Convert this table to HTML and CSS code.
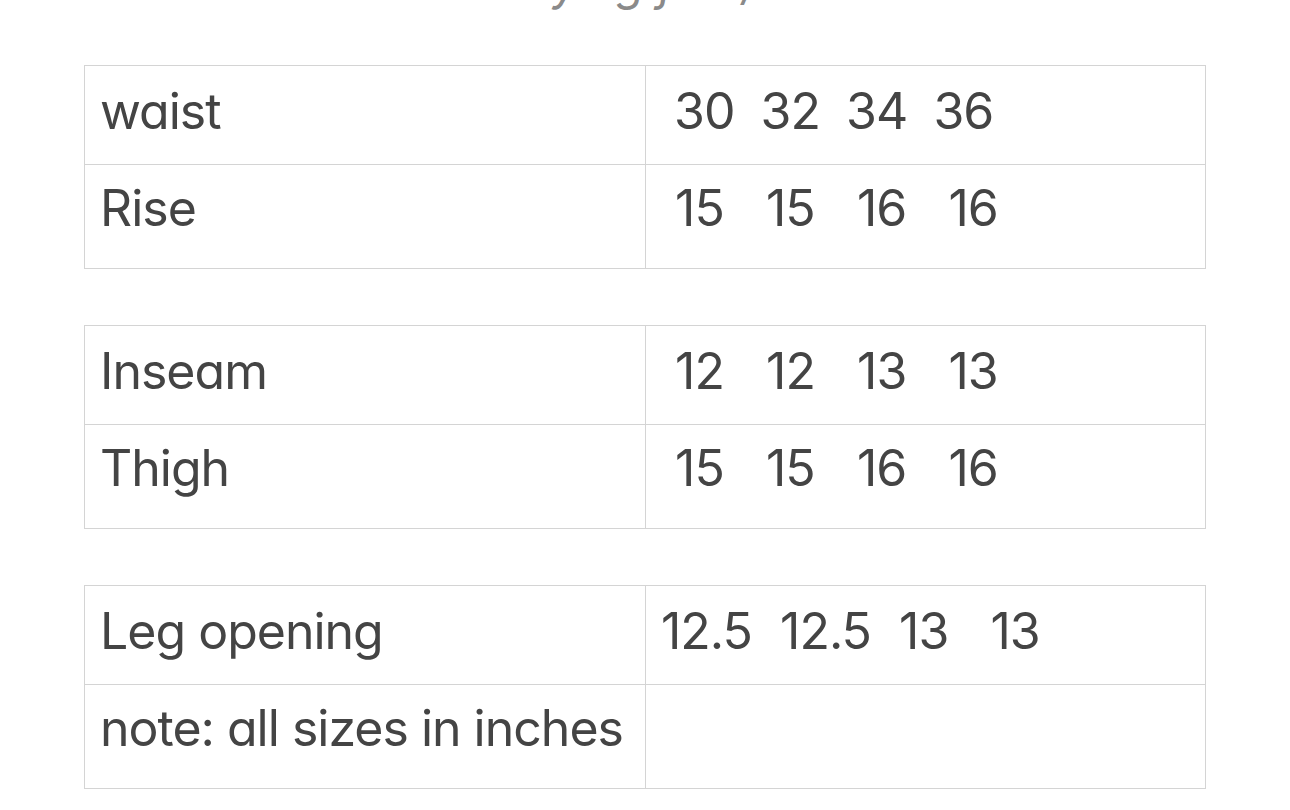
FILE: index.html
```html
<!DOCTYPE html>
<html>
<head>
<meta charset="utf-8">
<link rel="stylesheet" href="styles.css">
</head>
<body>
<div class="page">
  <div class="title">measured laying flat / actual size</div>
  <table class="sizes">
    <tr class="r1"><td class="label">waist</td><td class="vals"> 30  32  34  36</td></tr>
    <tr class="r2"><td class="label">Rise</td><td class="vals wide"> 15   15   16   16</td></tr>
  </table>
  <table class="sizes">
    <tr class="r1"><td class="label">Inseam</td><td class="vals wide"> 12   12   13   13</td></tr>
    <tr class="r2"><td class="label">Thigh</td><td class="vals wide"> 15   15   16   16</td></tr>
  </table>
  <table class="sizes">
    <tr class="r1"><td class="label">Leg opening</td><td class="vals wide">12.5  12.5  13   13</td></tr>
    <tr class="r2"><td class="label">note: all sizes in inches</td><td class="vals"></td></tr>
  </table>
</div>
</body>
</html>
```
FILE: styles.css
```css
html, body {
  margin: 0;
  padding: 0;
  background: #ffffff;
}
.page {
  padding: 0 84px;
  font-family: Inter, "Liberation Sans", sans-serif;
  font-feature-settings: "cv11" 1;
  color: #444444;
  display: flex;
  flex-direction: column;
  gap: 56px;
}
.title {
  font-size: 46px;
  color: #8a8a8a;
  font-style: italic;
  text-align: center;
  height: 9px;
  line-height: 9px;
  margin-top: -21px;
  margin-bottom: 21px;
  white-space: nowrap;
}
.sizes {
  border-collapse: collapse;
  width: 1122px;
  table-layout: fixed;
}
.sizes td {
  border: 1px solid #d4d4d4;
  font-size: 50px;
  letter-spacing: -0.02em;
  padding: 0 15px;
  vertical-align: top;
  white-space: pre;
}
.sizes .label {
  width: 530px;
}
.sizes .wide {
  word-spacing: 1px;
}
.r1 {
  height: 99px;
}
.r1 td {
  padding-top: 15px;
}
.r2 {
  height: 104px;
}
.r2 td {
  padding-top: 13px;
}
```
